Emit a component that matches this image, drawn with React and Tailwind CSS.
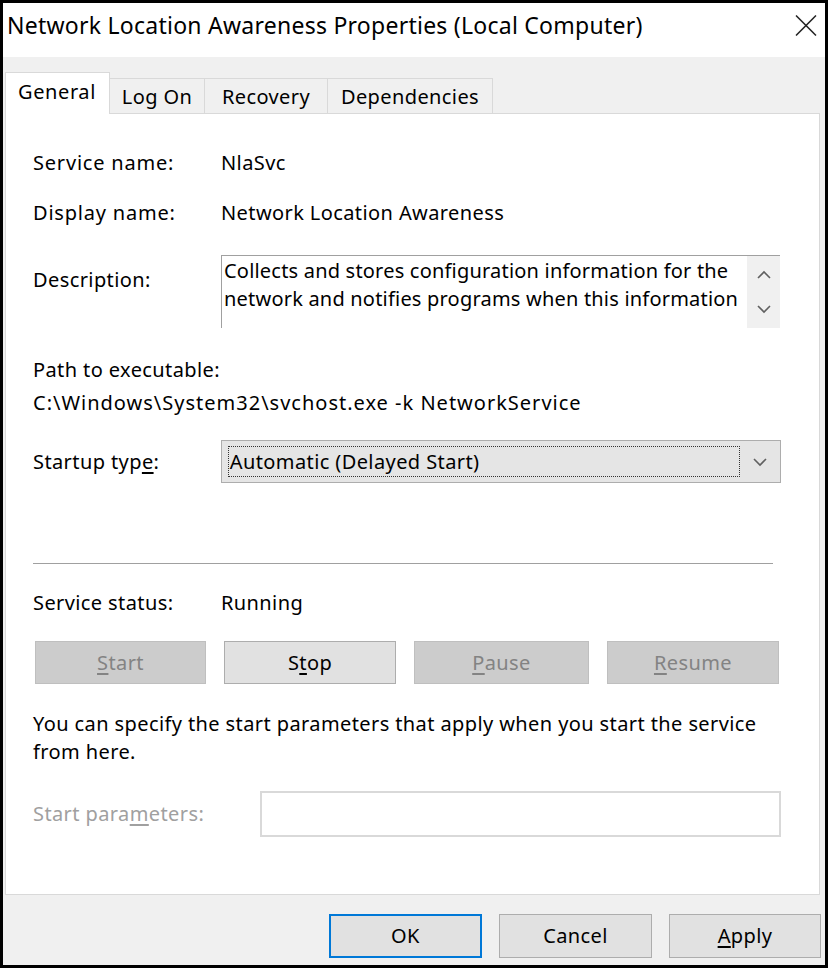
import React from "react";

const font = { fontFamily: '"Noto Sans", "Open Sans", sans-serif' };

function Chevron({ dir = "down", className = "" }) {
  return (
    <svg width="16" height="10" viewBox="0 0 16 10" className={className}>
      {dir === "down" ? (
        <polyline points="2,2 8,8 14,2" fill="none" stroke="#606060" strokeWidth="1.6" />
      ) : (
        <polyline points="2,8 8,2 14,8" fill="none" stroke="#606060" strokeWidth="1.6" />
      )}
    </svg>
  );
}

function Btn({ children, disabled, className = "" }) {
  return (
    <div
      className={
        "flex items-center justify-center h-[43px] border " +
        (disabled
          ? "bg-[#cccccc] border-[#bfbfbf] text-[#838383] "
          : "bg-[#e1e1e1] border-[#adadad] text-black ") +
        className
      }
    >
      {children}
    </div>
  );
}

export default function App() {
  return (
    <div
      className="w-[828px] h-[968px] border-[3px] border-black bg-[#f0f0f0] flex flex-col text-[20px] leading-[28px] tracking-[0.4px] text-black"
      style={font}
    >
      {/* Title bar */}
      <div className="h-[54px] bg-white flex items-center justify-between pl-[4px] pr-[8px] shrink-0">
        <div className="text-[23px] leading-[30px] tracking-[0.25px] -mt-[10px]">
          Network Location Awareness Properties (Local Computer)
        </div>
        <svg width="22" height="21" viewBox="0 0 22 21" className="-mt-[9px]">
          <line x1="1" y1="0.5" x2="21" y2="20.5" stroke="#222" strokeWidth="1.5" />
          <line x1="21" y1="0.5" x2="1" y2="20.5" stroke="#222" strokeWidth="1.5" />
        </svg>
      </div>

      {/* Tabs */}
      <div className="pl-[2px] pr-[5px] pt-[15px] flex flex-col flex-1">
        <div className="flex items-end h-[42px] relative z-10">
          <div className="w-[105px] h-[42px] bg-white border border-[#d9d9d9] border-b-0 flex items-start pt-[5px] pl-[12px] text-[20px] tracking-[0.6px]">
            General
          </div>
          <div className="w-[95px] h-[36px] border border-l-0 border-[#d9d9d9] border-b-0 flex items-center justify-center">
            Log On
          </div>
          <div className="w-[123px] h-[36px] border border-l-0 border-[#d9d9d9] border-b-0 flex items-center justify-center">
            Recovery
          </div>
          <div className="w-[165px] h-[36px] border border-l-0 border-[#d9d9d9] border-b-0 flex items-center justify-center">
            Dependencies
          </div>
        </div>

        {/* Panel */}
        <div className="h-[782px] -mt-[1px] bg-white border border-[#d9d9d9] pl-[27px] pr-[38px] flex flex-col">
          <div className="mt-[35px] flex h-[28px] items-center">
            <div className="w-[188px] tracking-[0.8px]">Service name:</div>
            <div>NlaSvc</div>
          </div>
          <div className="mt-[22px] flex h-[28px] items-center">
            <div className="w-[188px] tracking-[0.8px]">Display name:</div>
            <div>Network Location Awareness</div>
          </div>
          <div className="mt-[28px] flex">
            <div className="w-[188px] mt-[11px]">Description:</div>
            <div className="w-[559px] h-[73px] border border-[#a0a0a0] border-r-0 border-b-0 flex">
              <div className="flex-1 pl-[2px] pt-[1px] whitespace-nowrap overflow-hidden tracking-[0.2px]">
                Collects and stores configuration information for the
                <br />
                network and notifies programs when this information
              </div>
              <div className="w-[33px] bg-[#f0f0f0] flex flex-col items-center justify-between py-[14px]">
                <Chevron dir="up" />
                <Chevron dir="down" />
              </div>
            </div>
          </div>
          <div className="mt-[28px] h-[28px]">Path to executable:</div>
          <div className="mt-[5px] h-[28px] tracking-[1px]">C:\Windows\System32\svchost.exe -k NetworkService</div>
          <div className="mt-[23px] flex items-center">
            <div className="w-[188px]">
              Startup typ<span className="underline underline-offset-[3px]">e</span>:
            </div>
            <div className="w-[561px] h-[43px] bg-[#e5e5e5] border border-[#adadad] flex items-center pl-[6px] pr-[12px]">
              <div className="w-[512px] h-[31px] border border-dotted border-[#333] flex items-center pl-[1px]">
                Automatic (Delayed Start)
              </div>
              <div className="flex-1 flex justify-end">
                <Chevron dir="down" />
              </div>
            </div>
          </div>
          <div className="mt-[80px] h-[1px] w-[740px] bg-[#a0a0a0]" />
          <div className="mt-[25px] flex h-[28px] items-center">
            <div className="w-[188px]">Service status:</div>
            <div>Running</div>
          </div>
          <div className="mt-[24px] flex pl-[2px] gap-[18px]">
            <Btn disabled className="w-[171px]">
              <span><span className="underline underline-offset-[3px]">S</span>tart</span>
            </Btn>
            <Btn className="w-[172px]">
              <span>S<span className="underline underline-offset-[3px]">t</span>op</span>
            </Btn>
            <Btn disabled className="w-[175px]">
              <span><span className="underline underline-offset-[3px]">P</span>ause</span>
            </Btn>
            <Btn disabled className="w-[172px]">
              <span><span className="underline underline-offset-[3px]">R</span>esume</span>
            </Btn>
          </div>
          <div className="mt-[26px] whitespace-nowrap">
            You can specify the start parameters that apply when you start the service
            <br />
            from here.
          </div>
          <div className="mt-[25px] flex items-center">
            <div className="w-[227px] text-[#a0a0a0]">
              Start para<span className="underline underline-offset-[3px]">m</span>eters:
            </div>
            <div className="w-[522px] h-[46px] border-2 border-[#d9d9d9] bg-white" />
          </div>
        </div>

        {/* Bottom buttons */}
        <div className="flex justify-end gap-[17px] pt-[19px]">
          <div className="w-[153px] h-[44px] bg-[#e1e1e1] border-2 border-[#0078d7] flex items-center justify-center">
            OK
          </div>
          <div className="w-[153px] h-[44px] bg-[#e1e1e1] border border-[#adadad] flex items-center justify-center">
            Cancel
          </div>
          <div className="w-[152px] h-[44px] bg-[#e1e1e1] border border-[#adadad] flex items-center justify-center mr-[-1px]">
            <span><span className="underline underline-offset-[3px]">A</span>pply</span>
          </div>
        </div>
      </div>
    </div>
  );
}
